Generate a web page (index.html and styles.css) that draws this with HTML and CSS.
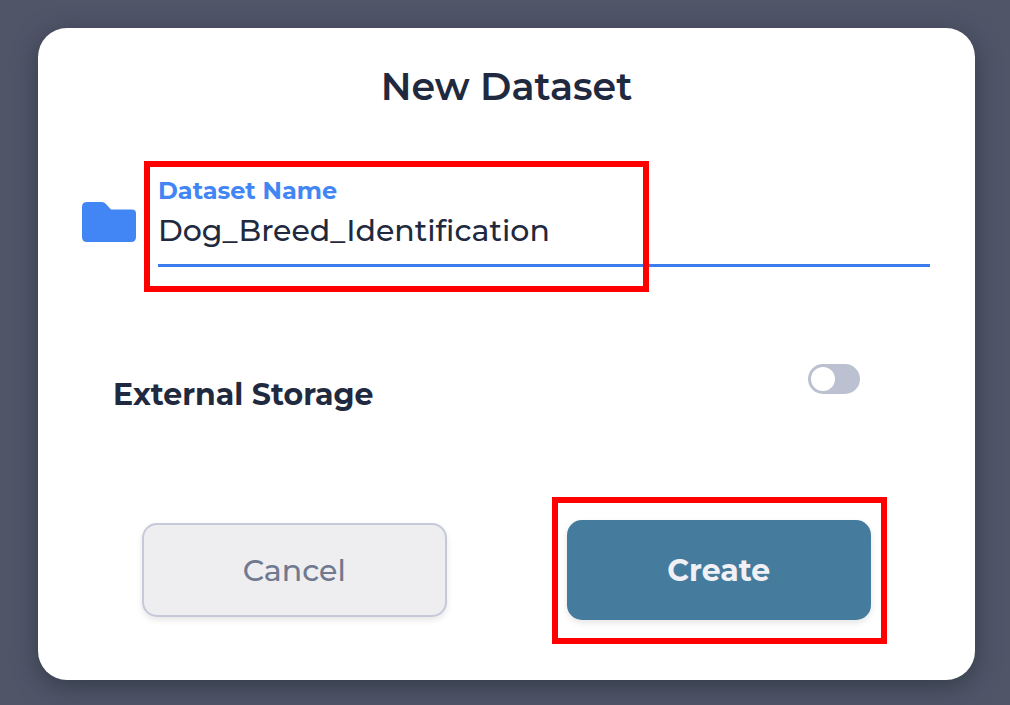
FILE: index.html
```html
<!DOCTYPE html>
<html lang="en">
<head>
<meta charset="utf-8">
<meta name="viewport" content="width=device-width, initial-scale=1">
<title>New Dataset</title>
<link rel="stylesheet" href="styles.css">
</head>
<body>
<main class="backdrop">
  <form class="dialog" role="dialog" aria-labelledby="dialog-title">
    <h1 class="title" id="dialog-title">New Dataset</h1>

    <div class="name-row">
      <svg class="folder" viewBox="0 0 54 40" aria-hidden="true">
        <path d="M5 0H20Q22 0 23.500 1.500L29 7.500H50Q54 7.500 54 11.500V35Q54 40 49 40H5Q0 40 0 35V5Q0 0 5 0Z"/>
      </svg>
      <div class="field">
        <label class="field-label" for="dataset-name">Dataset Name</label>
        <input class="field-input" id="dataset-name" type="text" value="Dog_Breed_Identification" spellcheck="false" autocomplete="off">
        <span class="highlight highlight-field"></span>
      </div>
    </div>

    <div class="storage-row">
      <label class="storage-label" for="external-storage">External Storage</label>
      <input class="toggle" id="external-storage" type="checkbox" role="switch">
    </div>

    <div class="actions">
      <button class="button cancel" type="button">Cancel</button>
      <div class="create-wrap">
        <button class="button create" type="button">Create</button>
        <span class="highlight highlight-create"></span>
      </div>
    </div>
  </form>
</main>
</body>
</html>
```

FILE: styles.css
```css
* {
  box-sizing: border-box;
}

body {
  margin: 0;
  font-family: Montserrat, Inter, sans-serif;
  color: #1f2a40;
}

.backdrop {
  min-height: 100vh;
  padding: 28px 35px 25px 38px;
  background: #505568;
}

.dialog {
  padding: 36px 0 60px;
  border-radius: 29px;
  background: #fff;
  box-shadow: 0 6px 24px rgba(32, 44, 52, 0.6);
}

.title {
  margin: 0;
  font-size: 38px;
  line-height: 46px;
  font-weight: 600;
  text-align: center;
}

.name-row {
  display: flex;
  align-items: center;
  gap: 22px;
  margin-top: 66px;
  padding: 0 45px 0 44px;
}

.folder {
  flex: none;
  width: 54px;
  height: 40px;
  fill: #4285f4;
}

.field {
  position: relative;
  flex: 1;
  min-width: 0;
}

.field-label {
  display: block;
  font-size: 24px;
  line-height: 30px;
  font-weight: 700;
  color: #4285f4;
}

.field-input {
  display: block;
  width: 100%;
  height: 61px;
  padding: 4px 0 14px;
  border: 0;
  border-bottom: 3px solid #3b7ded;
  outline: 0;
  background: transparent;
  color: inherit;
  font: 500 30px/40px Montserrat, Inter, sans-serif;
  font-variant-ligatures: none;
}

.storage-row {
  display: flex;
  align-items: flex-start;
  justify-content: space-between;
  margin-top: 97px;
  padding: 0 115px 0 75px;
}

.storage-label {
  padding-top: 11px;
  font-size: 30px;
  line-height: 40px;
  font-weight: 700;
}

.toggle {
  appearance: none;
  display: flex;
  align-items: center;
  width: 52px;
  height: 30px;
  margin: 0;
  padding: 0 3px;
  border-radius: 15px;
  background: #bcc1d1;
}

.toggle::before {
  content: "";
  width: 24px;
  height: 24px;
  border-radius: 50%;
  background: #fff;
}

.toggle:checked {
  justify-content: flex-end;
  background: #4285f4;
}

.actions {
  display: grid;
  grid-template-columns: 1fr 1fr;
  align-items: center;
  gap: 120px;
  margin-top: 105px;
  padding: 0 104px;
}

.button {
  display: block;
  width: 100%;
  border-radius: 15px;
  font-family: inherit;
  font-size: 30px;
  line-height: 40px;
  box-shadow: 0 3px 6px rgba(0, 0, 0, 0.1);
}

.cancel {
  padding: 26px 24px 24px;
  border: 2px solid #c5c9da;
  background: #eeeef1;
  color: #70798f;
  font-weight: 500;
}

.create-wrap {
  position: relative;
}

.create {
  padding: 31px 24px 29px;
  border: 0;
  background: #457b9d;
  color: #f1f1f5;
  font-weight: 700;
}

.highlight {
  position: absolute;
  border: 6px solid #f00;
  pointer-events: none;
}

.highlight-field {
  inset: -15px 281px -25px -14px;
}

.highlight-create {
  inset: -23px -16px -24px -15px;
}
```
